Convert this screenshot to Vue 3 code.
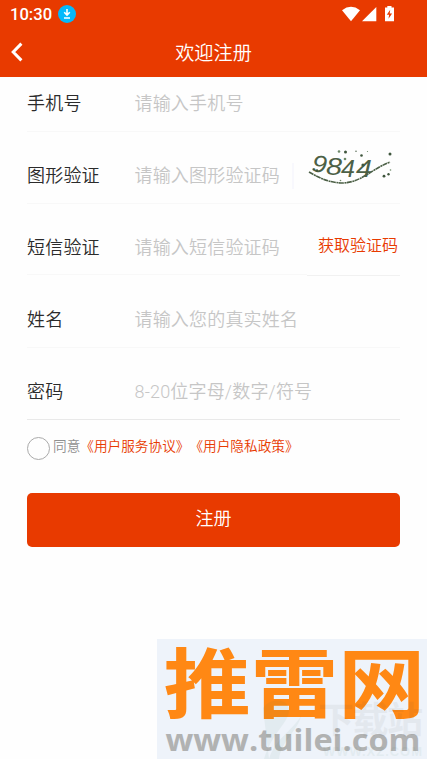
<script setup>
const fields = [
  { label: '手机号', hint: '请输入手机号' },
  { label: '图形验证', hint: '请输入图形验证码', extra: 'captcha' },
  { label: '短信验证', hint: '请输入短信验证码', extra: 'sms' },
  { label: '姓名', hint: '请输入您的真实姓名' },
  { label: '密码', hint: '8-20位字母/数字/符号', strong: true },
]
const dots = [
  [339, 150.5, 1.3], [345.5, 151, 1.5], [356, 150.3, 0.7], [367.5, 150.5, 0.6], [361.5, 154.5, 1.3],
  [390, 153, 1.5], [345, 158, 1.3], [384, 175.2, 1.4], [388.5, 173.3, 1.2], [390.5, 169, 0.8],
  [313.5, 168.5, 1], [317, 169.5, 1.2], [340.5, 179.5, 0.8], [363, 164, 1.6],
]
</script>

<template>
  <div class="page">
    <header class="top">
      <div class="status">
        <span class="time">10:30</span>
        <svg class="download" width="18" height="18" viewBox="0 0 18 18">
          <circle cx="9" cy="9" r="9" fill="#04b9fb" />
          <path d="M9 4v6M6.2 7.2 9 10l2.8-2.8M6 13h6" fill="none" stroke="#fff" stroke-width="1.6" />
        </svg>
        <svg class="signals" width="54" height="18" viewBox="341 5 54 18">
          <path d="M342 10.3Q351 3.4 360 10.3L351 21.3Z" fill="#fff" />
          <path d="M376.3 7V21.3H362Z" fill="#fff" />
          <path d="M385 7.6h2.3V6h4.2v1.6h2.5v13.6h-9Z" fill="#fff" />
          <path d="M390.2 9.8 386.8 14.8h2.3l-.6 4 3.6-5.4h-2.4Z" fill="#e83a00" />
        </svg>
      </div>
      <div class="nav">
        <svg class="back" width="12" height="20" viewBox="0 0 12 20">
          <path d="M10.4 1.6 2.2 10l8.2 8.4" fill="none" stroke="#fff" stroke-width="3" />
        </svg>
        <h1>欢迎注册</h1>
      </div>
    </header>

    <main>
      <div v-for="f in fields" :key="f.label" class="field" :class="{ strong: f.strong, sms: f.extra === 'sms' }">
        <label>{{ f.label }}</label>
        <span class="hint">{{ f.hint }}</span>
        <div v-if="f.extra === 'captcha'" class="captcha">
          <svg width="108" height="48" viewBox="292 151 108 48" overflow="visible">
            <path
              d="M309 171C321 178 331 182 343 182C362 181 370 169 390 161"
              fill="none" stroke="#4c6046" stroke-width="1.6" stroke-dasharray="5 .6 2 .4"
            />
            <g class="digits">
              <text x="312" y="171" transform="rotate(4 320 164)" textLength="15" lengthAdjust="spacingAndGlyphs">9</text>
              <text x="326" y="173.5" textLength="16" lengthAdjust="spacingAndGlyphs">8</text>
              <text x="341" y="176" textLength="14" lengthAdjust="spacingAndGlyphs">4</text>
              <text x="356" y="175.5" textLength="16" lengthAdjust="spacingAndGlyphs">4</text>
            </g>
            <circle v-for="(d, i) in dots" :key="i" :cx="d[0]" :cy="d[1]" :r="d[2]" :fill="i % 3 ? '#3f563d' : '#6f8a6a'" />
          </svg>
        </div>
        <a v-if="f.extra === 'sms'" class="code">获取验证码</a>
      </div>

      <div class="agree">
        <i class="radio"></i>
        <span>同意<a>《用户服务协议》</a><a>《用户隐私政策》</a></span>
      </div>

      <button class="submit">注册</button>
    </main>

    <footer class="brand">
      <svg width="270" height="120" viewBox="157 639 270 120">
        <g class="logo" transform="translate(0 712.3) scale(1.04 .91)">
          <text x="157.3" y="0">推</text>
          <text x="241" y="0">雷</text>
          <text x="325" y="0">网</text>
        </g>
        <text class="url" x="165.5" y="750.5" textLength="255" lengthAdjust="spacingAndGlyphs">www.tuilei.com</text>
        <g opacity=".06">
          <path d="M263 708C270 698 287 698 289 709C290 722 272 732 264 759H279C281 742 298 730 301 716C292 731 275 739 269 759" fill="#3c7a5a" />
          <text class="station" x="318" y="733" textLength="105">下载站</text>
          <text class="tiny" x="323" y="756" textLength="99">WWW.XZ.COM</text>
        </g>
      </svg>
    </footer>
  </div>
</template>

<style>
body {
  margin: 0;
  background: #fefefe;
}
</style>

<style scoped>
.page {
  display: flex;
  flex-direction: column;
  width: 427px;
  height: 759px;
  overflow: hidden;
  background: #fefefe;
  font-family: Roboto, 'Noto Sans CJK SC', sans-serif;
  font-weight: 350;
  text-spacing-trim: space-all;
  color: #2b2b2b;
}
.top {
  height: 77px;
  background: #e83a00;
  color: #fff;
}
.status {
  display: flex;
  align-items: center;
  height: 28px;
  padding: 0 32px 0 10px;
}
.time {
  font-size: 16.6px;
  font-weight: 500;
  line-height: 28px;
  padding-top: 2px;
  width: 48px;
}
.signals {
  margin-left: auto;
}
.nav {
  display: grid;
  grid-template-columns: 40px 1fr 40px;
  align-items: center;
  height: 48px;
}
.back {
  margin-left: 11px;
}
h1 {
  margin: 0;
  padding-top: 2px;
  font-size: 19.2px;
  font-weight: 350;
  text-align: center;
  line-height: 45px;
}
main {
  padding: 0 27px;
  flex: 1;
}
.field {
  display: flex;
  align-items: center;
  box-sizing: border-box;
  height: 72px;
  padding-top: 16px;
  border-bottom: 1px solid #f8f8f8;
  font-size: 18px;
  line-height: 28px;
}
.field:first-child {
  height: 55px;
  padding-top: 0;
}
.field.strong {
  border-bottom-color: #e9e9e9;
}
.field.sms {
  border-bottom: 0;
  padding-bottom: 1px;
  background:
    linear-gradient(#f8f8f8, #f8f8f8) 0 70px / 280px 1px no-repeat,
    linear-gradient(#f1f1f1, #f1f1f1) 280px 71px / 93px 1px no-repeat;
}
label {
  width: 107.5px;
  letter-spacing: 0.2px;
}
.hint {
  color: #c6c6c6;
  white-space: nowrap;
  letter-spacing: 0.18px;
}
.captcha {
  display: flex;
  align-items: center;
  height: 48px;
  margin-left: auto;
}
.captcha::before {
  content: '';
  width: 2px;
  height: 26px;
  margin-right: -2px;
  background: #f8f8fd;
}
.digits text {
  font: italic 400 23.5px 'Liberation Sans', sans-serif;
  fill: #4c6046;
}
.code {
  margin-left: auto;
  margin-right: 2px;
  padding-bottom: 3px;
  font-size: 16px;
  color: #e83a00;
}
.agree {
  display: flex;
  align-items: flex-start;
  height: 73px;
  box-sizing: border-box;
  padding-top: 16px;
  font-size: 13.65px;
  line-height: 20px;
  color: #909090;
  white-space: nowrap;
}
.radio {
  box-sizing: border-box;
  width: 23px;
  height: 23px;
  margin: 1px 3px 0 0;
  border: 1px solid #aaa;
  border-radius: 50%;
}
.agree a {
  display: inline-block;
  color: #e83a00;
}
.submit {
  display: block;
  width: 100%;
  height: 54px;
  padding: 0 0 6px;
  border: 0;
  border-radius: 5px;
  background: #e83a00;
  color: #fff;
  font: 350 18px Roboto, 'Noto Sans CJK SC', sans-serif;
}
.brand {
  align-self: flex-end;
  width: 270px;
  height: 120px;
  background: #eef3fa;
}
.brand svg {
  display: block;
}
.logo {
  font: 700 84px 'Noto Sans CJK SC', sans-serif;
  fill: #ff8814;
}
.url {
  font: 700 31px 'Open Sans', sans-serif;
  fill: #b1b2b2;
}
.station {
  font: 700 36px 'Noto Sans CJK SC', sans-serif;
  fill: #444;
}
.tiny {
  font: 700 13px 'Liberation Sans', sans-serif;
  fill: #3c7a5a;
}
</style>
